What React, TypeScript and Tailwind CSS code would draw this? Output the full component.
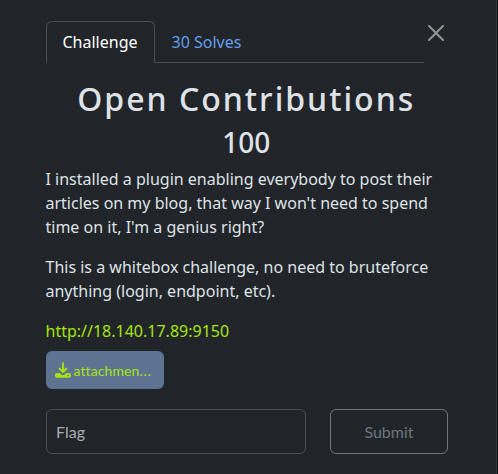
import { useState } from 'react';

const TABS = ['Challenge', '30 Solves'];

export default function App() {
  const [tab, setTab] = useState(TABS[0]);
  const [flag, setFlag] = useState('');

  return (
    <div className="h-[474px] w-[498px] overflow-hidden border-r border-[#0c0e10] bg-[#212529]">
      <div className="h-full border-r border-[#30353a] pt-[21px] pr-[49px] pl-[45.5px] font-['Noto_Sans',sans-serif] text-base leading-6 text-[#dee2e6]">
        {/* Tabs and close button */}
        <div className="flex">
          <nav className="flex h-[42px] w-[378px] shrink-0 border-b border-[#495057]">
            {TABS.map((name) => (
              <button
                key={name}
                onClick={() => setTab(name)}
                className={`h-[42px] rounded-t-md border px-4 ${
                  tab === name
                    ? 'border-[#495057] border-b-[#212529] bg-[#212529] text-white'
                    : 'border-transparent text-[#659ded]'
                }`}
              >
                {name}
              </button>
            ))}
          </nav>
          <button aria-label="Close" className="mt-1 ml-[4.5px] h-4 w-4">
            <svg viewBox="0 0 16 16" className="h-4 w-4" fill="#919395">
              <path d="M.293.293a1 1 0 0 1 1.414 0L8 6.586 14.293.293a1 1 0 1 1 1.414 1.414L9.414 8l6.293 6.293a1 1 0 0 1-1.414 1.414L8 9.414l-6.293 6.293a1 1 0 0 1-1.414-1.414L6.586 8 .293 1.707a1 1 0 0 1 0-1.414z" />
            </svg>
          </button>
        </div>

        <h2 className="mt-[17px] text-center text-[32px] leading-[38px] font-medium tracking-[2px] whitespace-nowrap">
          Open Contributions
        </h2>
        <h3 className="mt-[7px] text-center text-[28px] leading-[34px] font-medium">100</h3>

        {/* Description */}
        <div className="mt-2 space-y-4 whitespace-nowrap">
          <p>
            I installed a plugin enabling everybody to post their
            <br />
            articles on my blog, that way I won't need to spend
            <br />
            time on it, I'm a genius right?
          </p>
          <p>
            This is a whitebox challenge, no need to bruteforce
            <br />
            anything (login, endpoint, etc).
          </p>
          <p>
            <a className="text-[#a6e510]">http://18.140.17.89:9150</a>
          </p>
        </div>

        <a className="mt-2 ml-[0.5px] flex h-[38px] w-[118px] items-center gap-[3px] rounded-md bg-[#5e7391] pl-[8.5px] text-[#a6e510]">
          <svg viewBox="0 0 16 16" className="h-4 w-4" fill="none" stroke="currentColor">
            <path d="M8 1v9M4.5 6.5L8 10l3.5-3.5" strokeWidth="1.8" strokeLinecap="round" strokeLinejoin="round" />
            <path
              d="M2.2 11h2.4l1.7 1.4a2.5 2.5 0 0 0 3.4 0L11.4 11h2.4a2.1 2.1 0 0 1 2.2 2.2v.4a2.1 2.1 0 0 1-2.2 2.2H2.2A2.1 2.1 0 0 1 0 13.6v-.4A2.1 2.1 0 0 1 2.2 11zm11 1.6a.8.8 0 1 0 0 1.6.8.8 0 0 0 0-1.6z"
              fill="currentColor"
              fillRule="evenodd"
              stroke="none"
            />
          </svg>
          <span className="pt-px font-[Lato] text-sm tracking-[0.1px]">
            attachmen<span className="tracking-[0.8px]">...</span>
          </span>
        </a>

        {/* Flag submission */}
        <div className="mt-5 ml-[0.5px] flex gap-6">
          <input
            value={flag}
            onChange={(e) => setFlag(e.target.value)}
            placeholder="Flag"
            className="h-[45px] w-[260px] shrink-0 rounded-md border border-[#495057] px-[9px] font-[Lato] placeholder:text-[#a9acaf]"
          />
          <button className="h-[45px] w-[118px] shrink-0 rounded-md border border-[#6c757d] font-[Lato] text-[#6c757d]">
            Submit
          </button>
        </div>
      </div>
    </div>
  );
}
